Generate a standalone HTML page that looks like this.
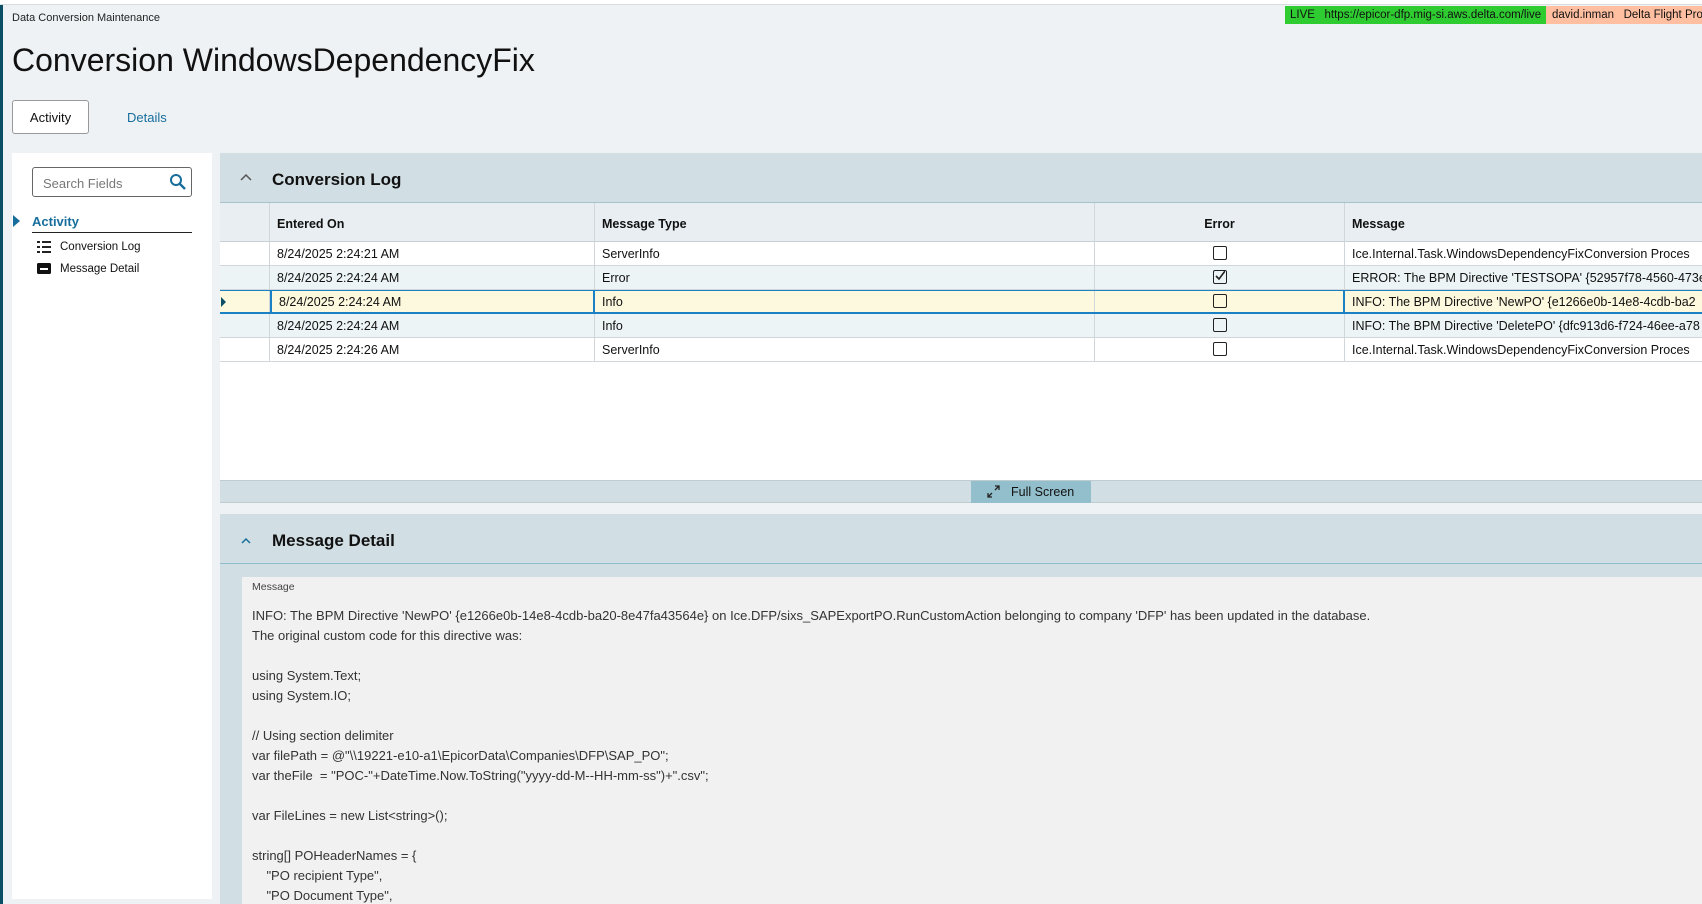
<!DOCTYPE html>
<html><head><meta charset="utf-8"><style>
*{box-sizing:border-box;margin:0;padding:0}
body{width:1702px;height:904px;overflow:hidden;background:#eef2f5;font-family:"Liberation Sans",sans-serif;color:#111;position:relative}
.a{position:absolute}
.t{white-space:nowrap}
.row{position:absolute;left:220px;width:1482px;height:24px;border-bottom:1px solid #d0d6d9;font-size:12.5px}
.row div{position:absolute;top:0;height:24px;line-height:25px;border-right:1px solid #d0d6d9}
.c0{left:0;width:50px}.c1{left:50px;width:325px;padding-left:7px}.c2{left:375px;width:500px;padding-left:7px}.c3{left:875px;width:250px}.c4{left:1125px;width:400px;padding-left:7px;border:none!important}
.cb{position:absolute;left:118px;top:4px;width:14px;height:14px;border:1.6px solid #222;border-radius:2px}
.code{position:absolute;left:252px;font-size:13px;color:#333;white-space:pre}
</style></head><body>
<div class="a" style="left:0;top:0;width:1702px;height:5px;background:#fff;border-bottom:1px solid #d8dcdf"></div>
<div class="a" style="left:0;top:5px;width:3px;height:899px;background:#0b4f66"></div>
<div class="a t" style="left:12px;top:12px;font-size:11px;color:#222">Data Conversion Maintenance</div>
<div class="a t" style="left:1285px;top:6px;height:18px;width:261px;background:#2fcc31;font-size:11.5px;line-height:18px;padding-left:5px;overflow:hidden">LIVE&nbsp;&nbsp;&nbsp;https://epicor-dfp.mig-si.aws.delta.com/live</div>
<div class="a t" style="left:1546px;top:6px;height:18px;width:156px;background:#ffbfa0;font-size:11.5px;line-height:18px;padding-left:6px;overflow:hidden">david.inman&nbsp;&nbsp;&nbsp;Delta Flight Pro</div>
<div class="a t" style="left:12px;top:42px;font-size:32px">Conversion WindowsDependencyFix</div>
<div class="a" style="left:12px;top:100px;width:77px;height:34px;background:#fff;border:1px solid #999;border-radius:3px;font-size:13px;text-align:center;line-height:34px">Activity</div>
<div class="a t" style="left:127px;top:110px;font-size:13px;color:#176e9c">Details</div>
<!-- sidebar -->
<div class="a" style="left:12px;top:153px;width:200px;height:746px;background:#fff"></div>
<div class="a" style="left:32px;top:167px;width:160px;height:30px;border:1px solid #666;border-radius:3px;background:#fff;font-size:13px;color:#777;padding:8px 10px">Search Fields</div>
<svg class="a" style="left:169px;top:173px" width="18" height="18" viewBox="0 0 18 18"><circle cx="7" cy="7" r="5" fill="none" stroke="#176e9c" stroke-width="2"/><path d="M11 11l5 5" stroke="#176e9c" stroke-width="2.4"/></svg>
<div class="a" style="left:13px;top:215px;border-left:7px solid #176e9c;border-top:6px solid transparent;border-bottom:6px solid transparent"></div>
<div class="a t" style="left:32px;top:214px;font-size:13px;font-weight:bold;color:#176e9c">Activity</div>
<div class="a" style="left:32px;top:232px;width:160px;height:1px;background:#222"></div>
<svg class="a" style="left:37px;top:241px" width="14" height="12"><g fill="#222"><rect x="0" y="0" width="3" height="2"/><rect x="5" y="0" width="9" height="2"/><rect x="0" y="5" width="3" height="2"/><rect x="5" y="5" width="9" height="2"/><rect x="0" y="10" width="3" height="2"/><rect x="5" y="10" width="9" height="2"/></g></svg>
<div class="a t" style="left:60px;top:241px;font-size:11.5px">Conversion Log</div>
<svg class="a" style="left:37px;top:263px" width="14" height="11"><rect width="14" height="11" rx="1.5" fill="#111"/><rect x="3" y="5" width="8" height="2" fill="#fff"/></svg>
<div class="a t" style="left:60px;top:263px;font-size:11.5px">Message Detail</div>
<!-- conversion log -->
<div class="a" style="left:220px;top:153px;width:1482px;height:50px;background:#d1dee3;border-bottom:1px solid #a9c3cc"></div>
<svg class="a" style="left:239px;top:173px" width="14" height="9"><path d="M2 7l5-5 5 5" fill="none" stroke="#555" stroke-width="1.5"/></svg>
<div class="a t" style="left:272px;top:170px;font-size:17px;font-weight:bold;color:#111">Conversion Log</div>
<div class="a" style="left:220px;top:203px;width:1482px;height:277px;background:#fff"></div>
<div class="row" style="top:203px;height:39px;background:#e8eef1;border-bottom:1px solid #c8cfd3;font-weight:bold;font-size:12.5px"><div class="c0" style="height:39px"></div><div class="c1" style="height:39px;line-height:42px">Entered On</div><div class="c2" style="height:39px;line-height:42px">Message Type</div><div class="c3" style="height:39px;line-height:42px;text-align:center">Error</div><div class="c4" style="height:39px;line-height:42px">Message</div></div>
<div class="row" style="top:242px"><div class="c0"></div><div class="c1">8/24/2025 2:24:21 AM</div><div class="c2">ServerInfo</div><div class="c3"><span class="cb"></span></div><div class="c4">Ice.Internal.Task.WindowsDependencyFixConversion Proces</div></div>
<div class="row" style="top:266px;background:#edf4f6"><div class="c0"></div><div class="c1">8/24/2025 2:24:24 AM</div><div class="c2">Error</div><div class="c3"><span class="cb"><svg class="a" style="left:1px;top:0" width="10" height="10"><path d="M1 5l3 3 6-8" fill="none" stroke="#222" stroke-width="1.6"/></svg></span></div><div class="c4">ERROR: The BPM Directive 'TESTSOPA' {52957f78-4560-473e-</div></div>
<div class="row" style="top:290px;background:#fdf9df;border-top:1px solid #1a82c4;border-bottom:2px solid #1a82c4"><div class="c0" style="height:21px"><span style="position:absolute;left:1px;top:6px;border-left:5px solid #0b4f66;border-top:5px solid transparent;border-bottom:5px solid transparent"></span></div><div class="c1" style="height:21px;line-height:22px;border-left:2px solid #1a82c4;border-right:2px solid #1a82c4">8/24/2025 2:24:24 AM</div><div class="c2" style="height:21px;line-height:22px">Info</div><div class="c3" style="height:21px;border-right:2px solid #1a82c4"><span class="cb" style="top:3px"></span></div><div class="c4" style="height:21px;line-height:22px">INFO: The BPM Directive 'NewPO' {e1266e0b-14e8-4cdb-ba2</div></div>
<div class="row" style="top:314px;background:#edf4f6"><div class="c0"></div><div class="c1">8/24/2025 2:24:24 AM</div><div class="c2">Info</div><div class="c3"><span class="cb"></span></div><div class="c4">INFO: The BPM Directive 'DeletePO' {dfc913d6-f724-46ee-a78</div></div>
<div class="row" style="top:338px"><div class="c0"></div><div class="c1">8/24/2025 2:24:26 AM</div><div class="c2">ServerInfo</div><div class="c3"><span class="cb"></span></div><div class="c4">Ice.Internal.Task.WindowsDependencyFixConversion Proces</div></div>
<div class="a" style="left:220px;top:480px;width:1482px;height:23px;background:#d1dee3;border-top:1px solid #bfcdd3;border-bottom:1px solid #bfcdd3"></div>
<div class="a t" style="left:971px;top:481px;width:120px;height:22px;background:#93bfcc;font-size:12.5px;line-height:22px;padding-left:40px">Full Screen</div>
<svg class="a" style="left:987px;top:485px" width="13" height="13"><path d="M1 12l4-4M1 8v4h4M12 1L8 5M8 1h4v4" fill="none" stroke="#222" stroke-width="1.3"/></svg>
<!-- message detail -->
<div class="a" style="left:220px;top:514px;width:1482px;height:390px;background:#d1dee3"></div>
<div class="a" style="left:220px;top:563px;width:1482px;height:1px;background:#8fbccb"></div>
<svg class="a" style="left:239px;top:536px" width="14" height="9"><path d="M3 7l4-4 4 4" fill="none" stroke="#176e9c" stroke-width="1.5"/></svg>
<div class="a t" style="left:272px;top:531px;font-size:17px;font-weight:bold">Message Detail</div>
<div class="a" style="left:242px;top:577px;width:1460px;height:327px;background:#f1f1f1"></div>
<div class="a t" style="left:252px;top:581px;font-size:10.5px;color:#444">Message</div>
<div class="code" style="top:608px">INFO: The BPM Directive 'NewPO' {e1266e0b-14e8-4cdb-ba20-8e47fa43564e} on Ice.DFP/sixs_SAPExportPO.RunCustomAction belonging to company 'DFP' has been updated in the database.</div>
<div class="code" style="top:628px">The original custom code for this directive was:</div>
<div class="code" style="top:668px">using System.Text;</div>
<div class="code" style="top:688px">using System.IO;</div>
<div class="code" style="top:728px">// Using section delimiter</div>
<div class="code" style="top:748px">var filePath = @"\\19221-e10-a1\EpicorData\Companies\DFP\SAP_PO";</div>
<div class="code" style="top:768px">var theFile  = "POC-"+DateTime.Now.ToString("yyyy-dd-M--HH-mm-ss")+".csv";</div>
<div class="code" style="top:808px">var FileLines = new List&lt;string&gt;();</div>
<div class="code" style="top:848px">string[] POHeaderNames = {</div>
<div class="code" style="top:868px">    "PO recipient Type",</div>
<div class="code" style="top:888px">    "PO Document Type",</div>
</body></html>
